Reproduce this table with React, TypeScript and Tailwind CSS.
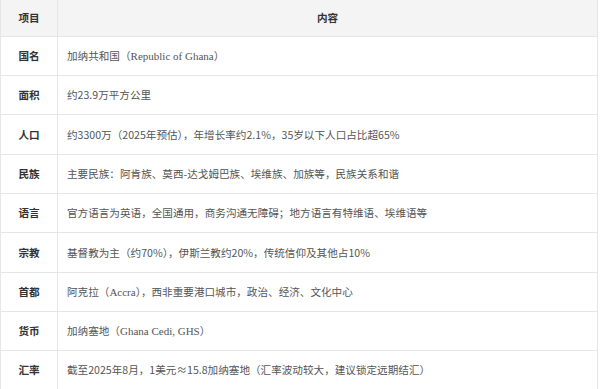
import React from "react";

interface Row {
  label: string;
  content: React.ReactNode;
  h: string;
}

const Latin = ({ children }: { children: React.ReactNode }) => (
  <span className="font-['Liberation_Serif','Noto_Sans_CJK_SC',serif] text-[11px]">{children}</span>
);

const rows: Row[] = [
  { label: "国名", h: "h-[39px]", content: <>加纳共和国（<Latin>Republic of Ghana</Latin>）</> },
  { label: "面积", h: "h-[39px]", content: "约23.9万平方公里" },
  { label: "人口", h: "h-[40px]", content: "约3300万（2025年预估），年增长率约2.1%，35岁以下人口占比超65%" },
  { label: "民族", h: "h-[39px]", content: "主要民族：阿肯族、莫西-达戈姆巴族、埃维族、加族等，民族关系和谐" },
  { label: "语言", h: "h-[39px]", content: "官方语言为英语，全国通用，商务沟通无障碍；地方语言有特维语、埃维语等" },
  { label: "宗教", h: "h-[40px]", content: "基督教为主（约70%），伊斯兰教约20%，传统信仰及其他占10%" },
  { label: "首都", h: "h-[39px]", content: <>阿克拉（<Latin>Accra</Latin>），西非重要港口城市，政治、经济、文化中心</> },
  { label: "货币", h: "h-[39px]", content: <>加纳塞地（<Latin>Ghana Cedi, GHS</Latin>）</> },
  { label: "汇率", h: "h-[39px]", content: "截至2025年8月，1美元≈15.8加纳塞地（汇率波动较大，建议锁定远期结汇）" },
];

export default function App() {
  return (
    <div className="w-[600px] h-[389px] bg-white overflow-hidden font-['Noto_Sans_CJK_SC','Microsoft_YaHei',sans-serif]">
      <div className="w-[598px] border-l border-r border-[#e6e6e6]">
        <div className="grid grid-cols-[57px_1fr] h-[36px] bg-[#f4f4f4]">
          <div className="flex items-center justify-center border-r border-[#e6e6e6] text-[10.6px] font-bold text-[#333]">
            项目
          </div>
          <div className="flex items-center justify-center text-[10.6px] font-bold text-[#333]">内容</div>
        </div>
        {rows.map((row) => (
          <div key={row.label} className={`grid grid-cols-[57px_1fr] border-t border-[#e6e6e6] ${row.h}`}>
            <div className="flex items-center justify-center border-r border-[#e6e6e6] text-[10.6px] font-bold text-[#333]">
              {row.label}
            </div>
            <div className="flex items-center pl-[9px] text-[10.6px] text-[#555] whitespace-nowrap">
              {row.content}
            </div>
          </div>
        ))}
      </div>
    </div>
  );
}
